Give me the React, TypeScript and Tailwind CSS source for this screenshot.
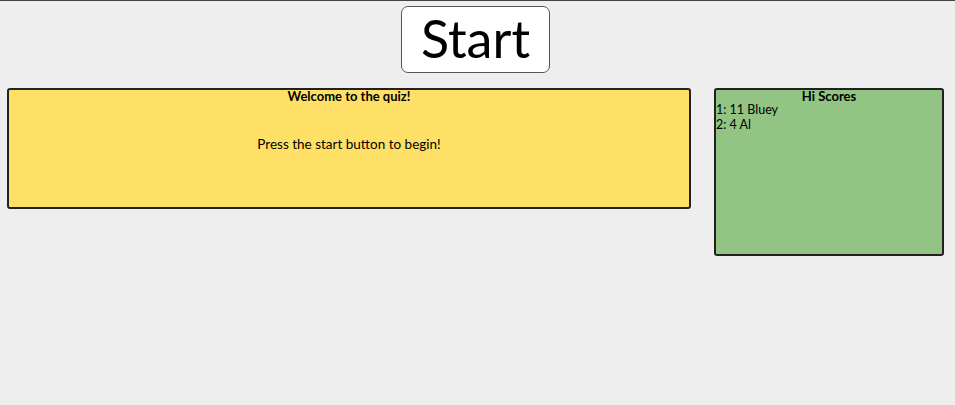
import React from 'react';

const scores = [
  { rank: 1, score: 11, name: 'Bluey' },
  { rank: 2, score: 4, name: 'Al' },
];

export default function App() {
  return (
    <div className="min-h-[405px] bg-[#eeeeee] border-t border-[#444444] font-['Lato','Noto_Sans',sans-serif] text-black">
      <div className="flex justify-center pt-[5px] pr-[4px]">
        <button className="w-[149px] h-[67px] bg-white border border-[#555555] rounded-[7px] text-[52px] leading-none pb-[3px]">
          Start
        </button>
      </div>

      <div className="flex items-start mt-[15px] pl-[7px]">
        <div className="w-[684px] h-[121px] bg-[#fee066] border-2 border-[#222222] rounded-[3px] text-center text-[13px]">
          <div className="font-bold leading-[12px]">Welcome to the quiz!</div>
          <div className="mt-[34px] text-[13.5px] leading-[16px]">Press the start button to begin!</div>
        </div>

        <div className="ml-[23px] w-[230px] h-[168px] bg-[#92c584] border-2 border-[#222222] rounded-[3px] text-[12.5px] leading-[15px]">
          <div className="font-bold text-center text-[13px] leading-[12px]">Hi Scores</div>
          {scores.map((s) => (
            <div key={s.rank}>
              {s.rank}: {s.score} {s.name}
            </div>
          ))}
        </div>
      </div>
    </div>
  );
}
